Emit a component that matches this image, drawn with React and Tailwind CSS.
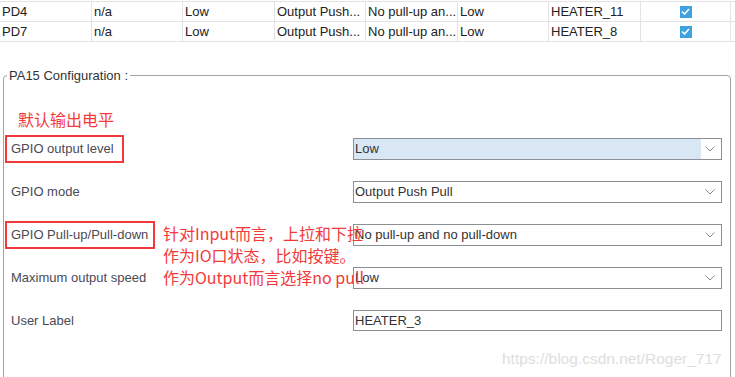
import React from 'react';

const rows = [
  ['PD4', 'n/a', 'Low', 'Output Push...', 'No pull-up an...', 'Low', 'HEATER_11'],
  ['PD7', 'n/a', 'Low', 'Output Push...', 'No pull-up an...', 'Low', 'HEATER_8'],
];

const colWidths = ['w-[92px]', 'w-[91px]', 'w-[92px]', 'w-[91px]', 'w-[92px]', 'w-[91px]', 'w-[92px]'];

const Chevron = () => (
  <svg width="10" height="6" viewBox="0 0 10 6" className="shrink-0">
    <path d="M0.5 0.5 L5 5 L9.5 0.5" fill="none" stroke="#8a8a8a" strokeWidth="1" />
  </svg>
);

const Check = () => (
  <span className="flex h-[12px] w-[12px] items-center justify-center bg-[#3da2de]">
    <svg width="9" height="7" viewBox="0 0 9 7">
      <path d="M1 3.5 L3.5 6 L8 1" fill="none" stroke="#fff" strokeWidth="1.6" />
    </svg>
  </span>
);

const Select = ({ value, selected }) => (
  <div className="flex h-[22px] w-[369px] items-stretch border border-[#8c9096] bg-white">
    <div className={`flex flex-1 items-center pl-px text-[13px] text-[#333] ${selected ? 'bg-[#d9e7f5]' : ''}`}>
      {value}
    </div>
    <div className="flex w-[20px] items-center justify-end pr-[6px]">
      <Chevron />
    </div>
  </div>
);

const Label = ({ text, boxed, w }) =>
  boxed ? (
    <div className={`flex h-[28px] ${w} items-center border-2 border-[#f23a3a] pl-[4px] text-[13px] text-[#4a4a55]`}>
      {text}
    </div>
  ) : (
    <div className="pl-[6px] text-[13px] text-[#4a4a55]">{text}</div>
  );

export default function App() {
  return (
    <div className="relative h-[377px] w-[735px] overflow-hidden bg-white font-['Liberation_Sans',Arial,sans-serif]">
      {/* pin table */}
      <div className="mt-px border-t border-[#e3e3e3]">
        {rows.map((r) => (
          <div key={r[0]} className="flex h-[20px] border-b border-[#e3e3e3]">
            {r.map((c, i) => (
              <div
                key={i}
                className={`${colWidths[i]} flex items-center border-r border-[#e3e3e3] pl-[2px] text-[13px] text-[#222] whitespace-nowrap overflow-hidden`}
              >
                {c}
              </div>
            ))}
            <div className="flex w-[90px] items-center justify-center border-r border-[#e3e3e3]">
              <Check />
            </div>
          </div>
        ))}
      </div>

      {/* configuration group */}
      <fieldset className="mt-[26px] ml-[3px] w-[728px] rounded-[4px] border border-[#a3a3a3] pl-px pb-[60px]">
        <legend className="ml-[2px] px-[2px] text-[13px] leading-[15px] text-[#333]">PA15 Configuration :</legend>

        <div className="pt-[28px] pl-[13px] font-['Noto_Sans_CJK_SC',sans-serif] text-[16px] leading-[16px] text-[#f23a3a]">
          默认输出电平
        </div>

        <div className="relative">
          <div className="grid grid-cols-[348px_369px] grid-rows-[repeat(5,43px)] items-center">
            <Label text="GPIO output level" boxed w="w-[119px]" />
            <Select value="Low" selected />

            <Label text="GPIO mode" />
            <Select value="Output Push Pull" />

            <Label text="GPIO Pull-up/Pull-down" boxed w="w-[150px]" />
            <Select value="No pull-up and no pull-down" />

            <Label text="Maximum output speed" />
            <Select value="Low" />

            <Label text="User Label" />
            <div className="flex h-[21px] w-[369px] items-center border border-[#8c9096] pl-px text-[13px] text-[#333]">
              HEATER_3
            </div>
          </div>

          <div className="absolute left-[158px] top-[95px] font-['Noto_Sans_CJK_SC',sans-serif] text-[16px] leading-[22px] text-[#f23a3a]">
            <div>针对Input而言，上拉和下拉</div>
            <div>作为IO口状态，比如按键。</div>
            <div>作为Output而言选择no pull</div>
          </div>
        </div>
      </fieldset>

      <div className="absolute left-[502px] top-[349px] text-[15.5px] leading-[20px] text-[#dedede]">
        https://blog.csdn.net/Roger_717
      </div>
    </div>
  );
}
